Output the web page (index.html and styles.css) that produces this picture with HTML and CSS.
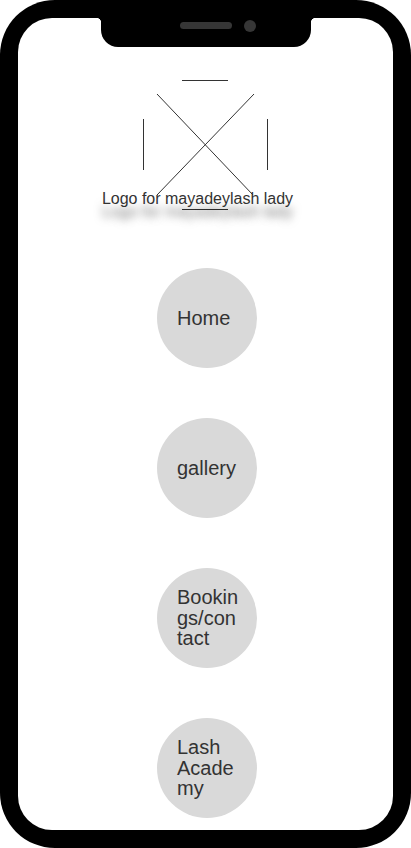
FILE: index.html
```html
<!DOCTYPE html>
<html lang="en">
<head>
  <meta charset="UTF-8">
  <meta name="viewport" content="width=device-width, initial-scale=1.0">
  <title>mayadeylash lady</title>
  <link rel="stylesheet" href="styles.css">
</head>
<body>
  <div class="phone">
    <div class="screen">
      <div class="notch">
        <span class="speaker"></span>
        <span class="camera"></span>
      </div>

      <div class="logo">
        <svg class="logo-box" width="125" height="130" viewBox="0 0 125 130">
          <g stroke="#333" stroke-width="1" fill="none">
            <line x1="39" y1="0.5" x2="85" y2="0.5" />
            <line x1="39" y1="129.5" x2="85" y2="129.5" />
            <line x1="0.5" y1="39" x2="0.5" y2="90" />
            <line x1="124.5" y1="39" x2="124.5" y2="90" />
            <line x1="14" y1="14" x2="110" y2="115" />
            <line x1="111" y1="14" x2="14" y2="115" />
          </g>
        </svg>
        <div class="logo-caption">Logo for mayadeylash lady</div>
      </div>

      <nav class="menu">
        <a class="menu-item" href="#">Home</a>
        <a class="menu-item" href="#">gallery</a>
        <a class="menu-item" href="#">Bookings/contact</a>
        <a class="menu-item" href="#">Lash Academy</a>
      </nav>
    </div>
  </div>
</body>
</html>
```

FILE: styles.css
```css
body {
  margin: 0;
  background: #fff;
  font-family: "Liberation Sans", Arial, sans-serif;
}
.phone {
  width: 411px;
  height: 848px;
  box-sizing: border-box;
  padding: 18px;
  background: #000;
  border-radius: 55px;
}
.screen {
  position: relative;
  height: 812px;
  background: #fff;
  border-radius: 34px;
  overflow: hidden;
  padding-top: 62px;
  box-sizing: border-box;
}
.notch {
  position: absolute;
  top: 0;
  left: 83px;
  width: 210px;
  height: 29px;
  background: #000;
  border-radius: 0 0 17px 17px;
  display: flex;
  align-items: flex-start;
  gap: 12px;
  padding: 4px 0 0 79px;
  box-sizing: border-box;
}
.notch::before,
.notch::after {
  content: "";
  position: absolute;
  top: 0;
  width: 5px;
  height: 5px;
}
.notch::before {
  left: -5px;
  background: radial-gradient(circle at 0 100%, transparent 5px, #000 5.5px);
}
.notch::after {
  right: -5px;
  background: radial-gradient(circle at 100% 100%, transparent 5px, #000 5.5px);
}
.speaker {
  width: 52px;
  height: 7px;
  border-radius: 4px;
  background: #363636;
}
.camera {
  width: 12px;
  height: 12px;
  margin-top: -2px;
  border-radius: 50%;
  background: #363636;
}
.logo {
  display: flex;
  flex-direction: column;
  align-items: center;
}
.logo-box {
  display: block;
}
.logo-caption {
  margin: -20px 16px 0 0;
  font-size: 16px;
  line-height: 18px;
  color: #333;
  text-shadow: 0 13px 8px rgba(0, 0, 0, 0.5);
}
.menu {
  display: flex;
  flex-direction: column;
  align-items: center;
  gap: 50px;
  margin-top: 60px;
  padding-left: 3px;
}
.menu-item {
  width: 100px;
  height: 100px;
  box-sizing: border-box;
  padding: 0 18px 0 20px;
  border-radius: 50%;
  background: #d9d9d9;
  display: flex;
  align-items: center;
  color: #333;
  text-decoration: none;
  font-size: 20px;
  line-height: 20.5px;
  overflow-wrap: anywhere;
}
```
